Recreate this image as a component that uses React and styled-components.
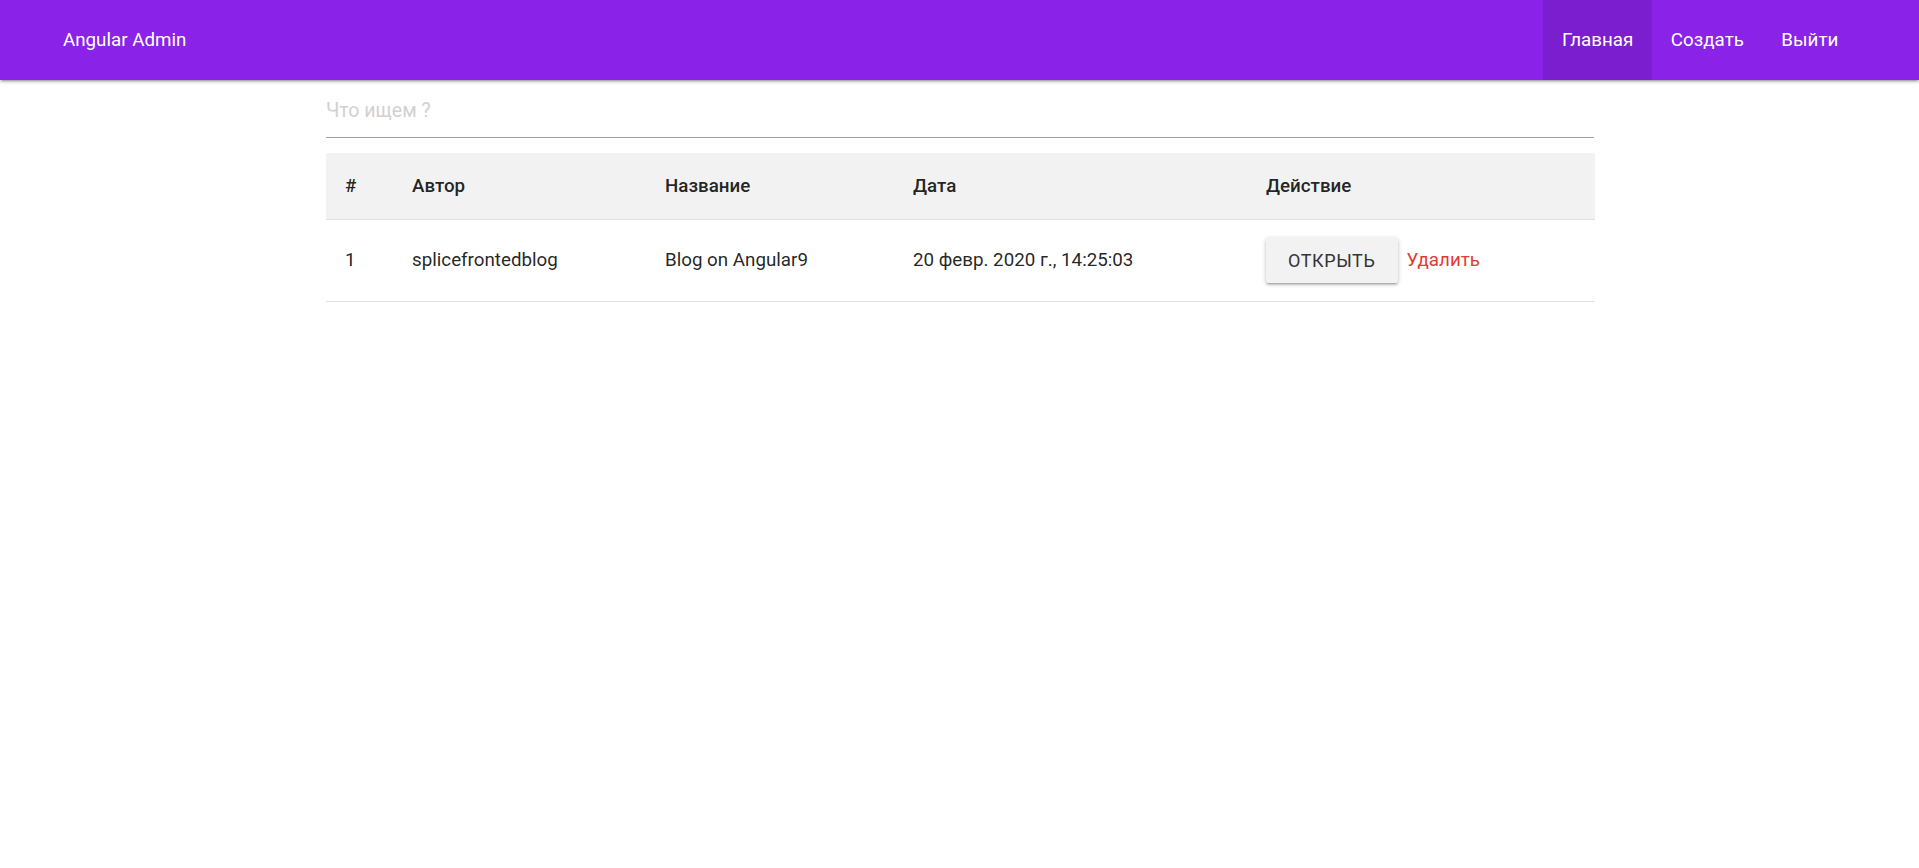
import React from "react";
import styled, { createGlobalStyle } from "styled-components";

const Global = createGlobalStyle`
  html, body { margin: 0; padding: 0; background: #fff; }
  body { font-family: Roboto, "Noto Sans", sans-serif; color: rgba(0,0,0,0.87); }
  * { box-sizing: border-box; }
`;

const Nav = styled.nav`
  height: 80px;
  background: #8a22e8;
  display: flex;
  align-items: stretch;
  justify-content: space-between;
  padding: 0 62px 0 63px;
  box-shadow: 0 2px 2px 0 rgba(0,0,0,.14), 0 3px 1px -2px rgba(0,0,0,.12), 0 1px 5px 0 rgba(0,0,0,.2);
  position: relative;
  z-index: 2;
`;

const Brand = styled.a`
  color: #fff;
  font-size: 18.75px;
  display: flex;
  align-items: center;
  text-decoration: none;
`;

const Menu = styled.ul`
  display: flex;
  list-style: none;
  margin: 0;
  padding: 0;
`;

const MenuItem = styled.li`
  display: flex;
  align-items: center;
  padding: 0 18.75px;
  color: #fff;
  font-size: 18.75px;
  background: ${p => (p.$active ? "rgba(0,0,0,0.1)" : "transparent")};
  cursor: pointer;
`;

const Container = styled.main`
  width: 1269px;
  margin: 0 auto;
  padding-left: 1px;
`;

const SearchInput = styled.input`
  display: block;
  width: 100%;
  height: 58px;
  border: none;
  border-bottom: 1px solid #9e9e9e;
  outline: none;
  padding: 4px 0 0;
  margin: 0 0 15px;
  font-family: Roboto, sans-serif;
  font-size: 19.5px;
  color: rgba(0,0,0,0.87);
  background: transparent;
  &::placeholder { color: #d1d1d1; }
`;

const Table = styled.table`
  width: 100%;
  border-collapse: collapse;
  table-layout: fixed;
  font-size: 18.75px;
`;

const HeadRow = styled.tr`
  background: #f2f2f2;
  border-bottom: 1px solid #e0e0e0;
`;

const Th = styled.th`
  height: 66px;
  padding: 0 19px;
  text-align: left;
  font-weight: 500;
  color: rgba(0,0,0,0.87);
  width: ${p => p.$w}px;
  &:first-child { border-top-left-radius: 2px; }
  &:last-child { border-top-right-radius: 2px; }
`;

const BodyRow = styled.tr`
  border-bottom: 1px solid #e0e0e0;
`;

const Td = styled.td`
  padding: 18px 19px;
  height: 81px;
  vertical-align: middle;
`;

const Actions = styled.div`
  display: flex;
  align-items: center;
  gap: 9px;
`;

const OpenButton = styled.button`
  height: 45px;
  padding: 0 22px;
  border: none;
  border-radius: 2.5px;
  background: #f2f2f2;
  color: #343434;
  font-family: Roboto, sans-serif;
  font-size: 18px;
  letter-spacing: 0.6px;
  text-transform: uppercase;
  box-shadow: 0 2px 2px 0 rgba(0,0,0,.14), 0 3px 1px -2px rgba(0,0,0,.12), 0 1px 5px 0 rgba(0,0,0,.2);
  cursor: pointer;
`;

const DeleteLink = styled.a`
  color: #e53935;
  font-size: 18.75px;
  cursor: pointer;
`;

const cols = [
  { t: "#", w: 67 },
  { t: "Автор", w: 253 },
  { t: "Название", w: 248 },
  { t: "Дата", w: 353 },
  { t: "Действие", w: 348 },
];

const posts = [
  { id: 1, author: "splicefrontedblog", title: "Blog on Angular9", date: "20 февр. 2020 г., 14:25:03" },
];

export default function App() {
  return (
    <>
      <Global />
      <Nav>
        <Brand>Angular Admin</Brand>
        <Menu>
          <MenuItem $active>Главная</MenuItem>
          <MenuItem>Создать</MenuItem>
          <MenuItem>Выйти</MenuItem>
        </Menu>
      </Nav>
      <Container>
        <SearchInput placeholder="Что ищем ?" />
        <Table>
          <thead>
            <HeadRow>
              {cols.map(c => (
                <Th key={c.t} $w={c.w}>{c.t}</Th>
              ))}
            </HeadRow>
          </thead>
          <tbody>
            {posts.map(p => (
              <BodyRow key={p.id}>
                <Td>{p.id}</Td>
                <Td>{p.author}</Td>
                <Td>{p.title}</Td>
                <Td>{p.date}</Td>
                <Td>
                  <Actions>
                    <OpenButton>Открыть</OpenButton>
                    <DeleteLink>Удалить</DeleteLink>
                  </Actions>
                </Td>
              </BodyRow>
            ))}
          </tbody>
        </Table>
      </Container>
    </>
  );
}
